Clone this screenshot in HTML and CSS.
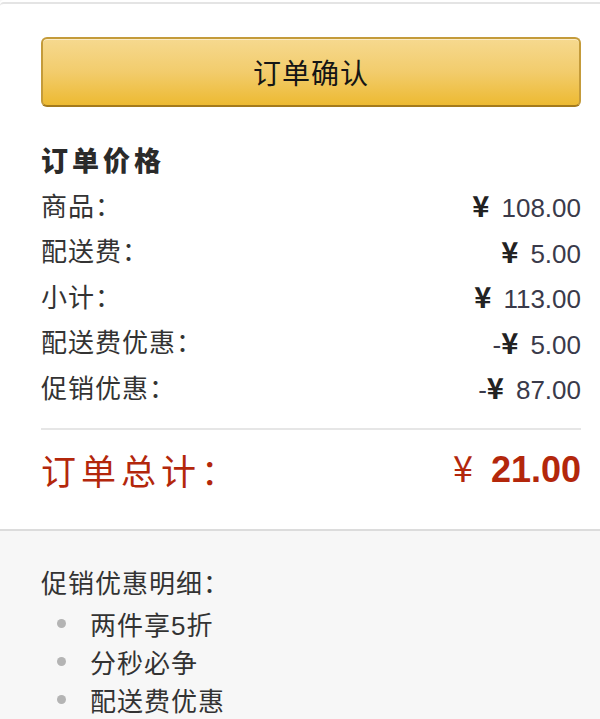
FILE: index.html
```html
<!DOCTYPE html>
<html lang="zh-CN">
<head>
<meta charset="utf-8">
<title>订单确认</title>
<link rel="stylesheet" href="styles.css">
</head>
<body>
<div class="card">
  <button class="confirm">订单确认</button>
  <h2 class="heading">订单价格</h2>
  <div class="rows">
    <div class="row"><span class="label">商品：</span><span class="amount"><span class="yen">¥</span>108.00</span></div>
    <div class="row"><span class="label">配送费：</span><span class="amount"><span class="yen">¥</span>5.00</span></div>
    <div class="row"><span class="label">小计：</span><span class="amount"><span class="yen">¥</span>113.00</span></div>
    <div class="row"><span class="label">配送费优惠：</span><span class="amount">-<span class="yen">¥</span>5.00</span></div>
    <div class="row"><span class="label">促销优惠：</span><span class="amount">-<span class="yen">¥</span>87.00</span></div>
  </div>
  <div class="divider"></div>
  <div class="total">
    <span class="total-label">订单总计：</span>
    <span class="total-amount"><span class="yen">¥</span><b>21.00</b></span>
  </div>
</div>
<div class="promo">
  <div class="promo-title">促销优惠明细：</div>
  <ul class="promo-list">
    <li>两件享5折</li>
    <li>分秒必争</li>
    <li>配送费优惠</li>
  </ul>
</div>
</body>
</html>
```

FILE: styles.css
```css
html, body {
  margin: 0;
  padding: 0;
  background: #f7f7f7;
  font-family: "Liberation Sans", "Noto Sans CJK SC", sans-serif;
  color: #333;
}

.card {
  margin-top: 2px;
  background: #fff;
  border-top: 2px solid #e4e4e4;
  border-bottom: 2px solid #dcdcdc;
  border-top-left-radius: 4px;
  padding: 33px 19px 29px 41px;
  box-shadow: 0 -2px 0 #fff;
}

.confirm {
  display: block;
  width: 100%;
  height: 70px;
  margin: 0;
  padding: 0;
  border: 2px solid #c49b3a;
  border-bottom-color: #a47a1c;
  border-radius: 6px;
  background: linear-gradient(to bottom, #f6d98f 0%, #f2cc6c 50%, #edba32 100%);
  box-shadow: inset 0 1px 0 rgba(255,255,255,0.5);
  font-family: "Noto Sans CJK SC", sans-serif;
  font-size: 28px;
  letter-spacing: 1px;
  color: #151515;
  cursor: pointer;
}

.heading {
  margin: 33px 0 0 0;
  height: 40px;
  line-height: 40px;
  font-family: "Noto Sans CJK SC", sans-serif;
  font-size: 27px;
  font-weight: 900;
  letter-spacing: 4px;
  color: #2a2a2a;
}

.rows {
  margin-top: 4px;
}

.row {
  display: flex;
  justify-content: space-between;
  align-items: center;
  height: 45.5px;
  font-size: 26px;
  line-height: 30px;
}

.label {
  letter-spacing: 1px;
}

.amount {
  color: #3a3a4a;
}

.yen {
  font-family: "Noto Sans CJK SC", sans-serif;
  font-size: 29px;
  line-height: 1;
  font-weight: bold;
  color: #222;
  margin-right: 12px;
}

.divider {
  margin-top: 16px;
  height: 2px;
  background: #e6e6e6;
}

.total {
  display: flex;
  justify-content: space-between;
  align-items: center;
  height: 60px;
  margin-top: 10px;
  color: #b3270b;
}

.total-label {
  font-size: 35px;
  letter-spacing: 5px;
}

.total-amount {
  font-size: 36px;
}

.total-amount .yen {
  color: #b3270b;
  font-size: 36px;
  font-weight: normal;
  margin-right: 18px;
}

.total-amount b {
  font-weight: bold;
}

.promo {
  padding: 34px 19px 0 41px;
  font-size: 26px;
}

.promo-title {
  height: 38px;
  line-height: 38px;
  letter-spacing: 1px;
  margin-bottom: 2px;
}

.promo-list {
  list-style: none;
  margin: 0;
  padding: 0;
}

.promo-list li {
  display: flex;
  align-items: center;
  height: 38px;
  letter-spacing: 1px;
}

.promo-list li::before {
  content: "";
  width: 9px;
  height: 9px;
  border-radius: 50%;
  background: #b4b4b4;
  margin-left: 16px;
  margin-right: 24px;
  flex: none;
}
```
